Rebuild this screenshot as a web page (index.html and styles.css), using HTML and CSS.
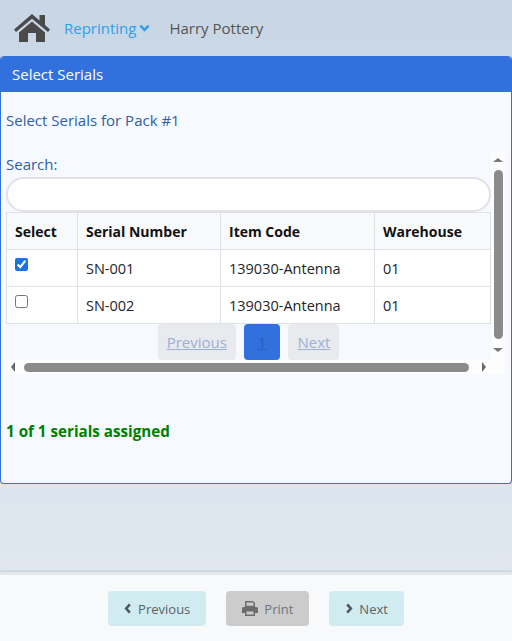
FILE: index.html
```html
<!DOCTYPE html>
<html lang="en">
<head>
  <meta charset="UTF-8">
  <title>Select Serials</title>
  <link rel="stylesheet" href="styles.css">
</head>
<body>
  <nav class="topbar">
    <svg class="home-icon" viewBox="0 0 36 28" aria-hidden="true">
      <path d="M0 15.500 18 0l7.500 6.400V1H31v10.100l5 4.400-2 2.600L18 4.700 2 18.100z" />
      <path d="M5 18.500 18 7.500l13 11V28h-9v-9h-8v9H5z" />
    </svg>
    <a class="nav-link">Reprinting
      <svg class="chev-down" viewBox="0 0 12 8" aria-hidden="true"><path d="M1.500 1.500 6 6l4.500-4.500" /></svg>
    </a>
    <span class="nav-user">Harry Pottery</span>
  </nav>

  <section class="panel">
    <header class="panel-head">Select Serials</header>
    <div class="panel-body">
      <p class="pack-title">Select Serials for Pack #1</p>

      <div class="scroll-box">
        <div class="scroll-main">
          <div class="scroll-content">
            <label class="search-label" for="searchInput">Search:</label>
            <input class="search-input" type="text" id="searchInput">
            <table class="serials">
              <thead>
                <tr>
                  <th class="col-select">Select</th>
                  <th class="col-serial">Serial Number</th>
                  <th class="col-item">Item Code</th>
                  <th>Warehouse</th>
                </tr>
              </thead>
              <tbody>
                <tr>
                  <td class="cell-check"><input type="checkbox" checked></td>
                  <td>SN-001</td>
                  <td>139030-Antenna</td>
                  <td>01</td>
                </tr>
                <tr>
                  <td class="cell-check"><input type="checkbox"></td>
                  <td>SN-002</td>
                  <td>139030-Antenna</td>
                  <td>01</td>
                </tr>
              </tbody>
            </table>
            <div class="pager">
              <a class="page-btn">Previous</a>
              <a class="page-btn current">1</a>
              <a class="page-btn">Next</a>
            </div>
          </div>
          <div class="hbar">
            <span class="arrow arrow-left"></span>
            <span class="hbar-thumb"></span>
            <span class="arrow arrow-right"></span>
          </div>
        </div>
        <div class="vbar">
          <span class="arrow arrow-up"></span>
          <span class="vbar-thumb"></span>
          <span class="arrow arrow-down"></span>
        </div>
      </div>

      <p class="assigned">1 of 1 serials assigned</p>
    </div>
  </section>

  <div class="spacer"></div>

  <footer class="footer">
    <button class="foot-btn">
      <svg class="chev-side" viewBox="0 0 8 12" aria-hidden="true"><path d="M6 1.500 2 6l4 4.500" /></svg>
      Previous
    </button>
    <button class="foot-btn print">
      <svg class="print-icon" viewBox="0 0 16 15" aria-hidden="true">
        <path d="M3 0h8l2 2v4H3zM4.500 1.500v3.200h7V2.600l-1-1.100z" fill-rule="evenodd" />
        <path d="M1.500 6H14.500A1.500 1.500 0 0 1 16 7.500V12h-3v3H3v-3H0V7.500A1.500 1.500 0 0 1 1.500 6zM4.500 10.500v3h7v-3z" fill-rule="evenodd" />
      </svg>
      Print
    </button>
    <button class="foot-btn">
      <svg class="chev-side" viewBox="0 0 8 12" aria-hidden="true"><path d="M2 1.500 6 6l-4 4.500" /></svg>
      Next
    </button>
  </footer>
</body>
</html>
```

FILE: styles.css
```css
* {
  box-sizing: border-box;
}

html, body {
  height: 100%;
}

body {
  margin: 0;
  height: 641px;
  display: flex;
  flex-direction: column;
  overflow: hidden;
  font-family: "Open Sans", "Noto Sans", sans-serif;
  font-size: 15px;
  color: #212529;
  background: linear-gradient(#c8d6e5, #e3e9f0);
}

.topbar {
  height: 56px;
  display: flex;
  align-items: center;
  padding-left: 14px;
}

.home-icon {
  width: 36px;
  height: 28px;
  fill: #4a4a4a;
}

.nav-link {
  margin-left: 14px;
  color: #2e9fe8;
  display: flex;
  align-items: center;
  gap: 3px;
}

.chev-down {
  width: 11px;
  height: 8px;
  fill: none;
  stroke: #2e9fe8;
  stroke-width: 2.800;
}

.nav-user {
  margin-left: 19px;
  color: #555;
}

.panel {
  height: 428px;
  display: flex;
  flex-direction: column;
  background: #f6f9ff;
  border: 1px solid #3271dd;
  border-top: none;
  border-radius: 4px;
}

.panel-head {
  height: 36px;
  padding: 0 11px;
  display: flex;
  align-items: center;
  color: #fff;
  background: #3271dd;
  border-radius: 4px 4px 0 0;
}

.panel-body {
  flex: 1;
  padding: 0 6px 0 5px;
}

.pack-title {
  margin: 18px 0 22px;
  height: 20px;
  line-height: 20px;
  color: #2f5ea8;
}

.scroll-box {
  display: flex;
  width: 499px;
  height: 222px;
  background: #fdfdfe;
}

.scroll-main {
  width: 485px;
  display: flex;
  flex-direction: column;
}

.scroll-content {
  flex: 1;
  background: #f6f9ff;
  padding-top: 3px;
}

.search-label {
  display: block;
  height: 22px;
  line-height: 18px;
  color: #2f5ea8;
}

.search-input {
  display: block;
  width: 100%;
  height: 35px;
  border: 2px solid #e2e2e4;
  border-radius: 18px;
  background: #fff;
  outline: none;
}

.serials {
  width: 100%;
  table-layout: fixed;
  border-collapse: collapse;
  background: #fff;
  font-size: 14.500px;
}

.serials th,
.serials td {
  height: 37px;
  padding: 0 8px;
  text-align: left;
  border: 1px solid #dee2e6;
}

.serials th {
  font-size: 14px;
  font-weight: 700;
  color: #111;
  background: #f8f9fa;
}

.col-select {
  width: 71px;
}

.col-serial {
  width: 143px;
}

.col-item {
  width: 154px;
}

.cell-check {
  vertical-align: top;
}

.cell-check input {
  display: block;
  width: 13px;
  height: 13px;
  margin: 8px 0 0;
  accent-color: #1a73e8;
}

.pager {
  display: flex;
  justify-content: center;
  gap: 8px;
  height: 36px;
}

.page-btn {
  display: flex;
  align-items: center;
  padding: 0 9px;
  color: #9cb0d8;
  text-decoration: underline;
  background: #e8eaee;
  border-radius: 4px;
}

.page-btn.current {
  padding: 0 14px;
  color: #2a5db8;
  background: #3271dd;
}

.hbar {
  height: 14px;
  display: flex;
  align-items: center;
  padding: 0 5px 0 5px;
  background: #fdfdfe;
}

.hbar-thumb {
  width: 445px;
  height: 9px;
  margin: 0 auto 0 9px;
  background: #8b8b8b;
  border-radius: 5px;
}

.vbar {
  width: 14px;
  height: 222px;
  display: flex;
  flex-direction: column;
  align-items: center;
  padding: 6px 0 22px;
}

.vbar-thumb {
  width: 9px;
  height: 169px;
  margin: 8px 0 auto;
  background: #8b8b8b;
  border-radius: 5px;
}

.arrow {
  width: 0;
  height: 0;
  flex: none;
  border: 4px solid transparent;
}

.arrow-up {
  border-width: 0 5px 4px;
  border-bottom-color: #777;
}

.arrow-down {
  border-width: 4px 5px 0;
  border-top-color: #777;
}

.arrow-left {
  border-width: 5px 4px 5px 0;
  border-right-color: #666;
}

.arrow-right {
  border-width: 5px 0 5px 4px;
  border-left-color: #666;
}

.assigned {
  margin: 47px 0 0;
  font-size: 15.200px;
  font-weight: 700;
  color: #008000;
}

.spacer {
  flex: 1;
}

.footer {
  height: 69px;
  display: flex;
  justify-content: center;
  align-items: flex-start;
  gap: 20px;
  padding-top: 16px;
  background: #f8f9fb;
  border-top: 3px solid #e3e6ea;
  box-shadow: 0 -1px 2px rgba(0, 0, 0, 0.12);
}

.foot-btn {
  height: 35px;
  display: flex;
  align-items: center;
  gap: 6px;
  padding: 0 16px;
  font: inherit;
  font-size: 13px;
  color: #5a6268;
  background: #d1ecf1;
  border: none;
  border-radius: 4px;
}

.foot-btn.print {
  color: #6c757d;
  background: #cccccc;
}

.chev-side {
  width: 8px;
  height: 11px;
  fill: none;
  stroke: #50575d;
  stroke-width: 2.800;
}

.print-icon {
  width: 16px;
  height: 15px;
  fill: #6c6c6c;
}
```
